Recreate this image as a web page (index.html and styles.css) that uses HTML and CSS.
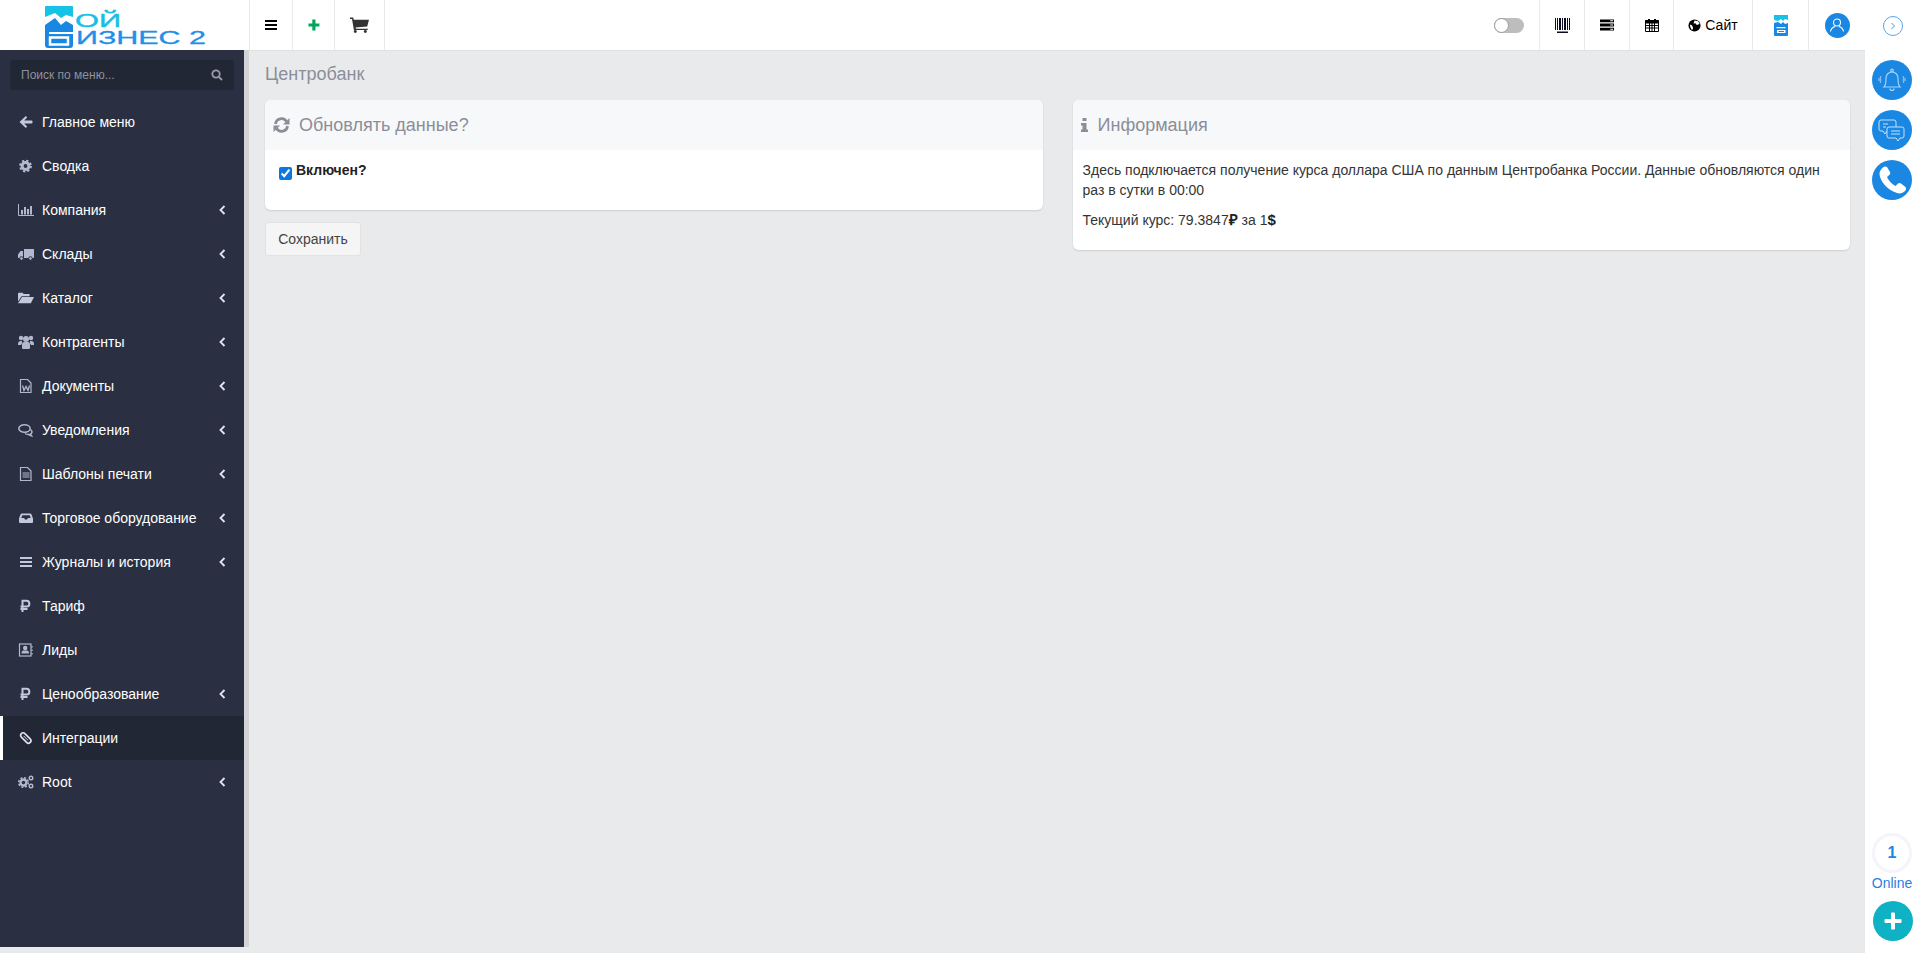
FILE: index.html
```html
<!DOCTYPE html>
<html lang="ru">
<head>
<meta charset="utf-8">
<title>Центробанк</title>
<link rel="stylesheet" href="styles.css">
</head>
<body>
<div class="app">
  <div class="workspace">
    <header class="topbar">
      <div class="logo">
        <svg class="logo-svg" width="170" height="45" viewBox="0 0 170 45">
          <path d="M1 1h26q1 0 1 1v10l-7-2-5 3-6-5L0 12V2q0-1 1-1z" fill="#16c3e6"/>
          <path d="M0 20l10-7 6 7 5-4 7 4v20q0 3-3 3H3q-3 0-3-3z" fill="#1a87e2"/>
          <rect x="4" y="27" width="24" height="2" fill="#fff"/>
          <rect x="5" y="32.500" width="18" height="7" fill="none" stroke="#fff" stroke-width="2.500"/>
          <text class="logo-top" x="30" y="22" textLength="46" lengthAdjust="spacingAndGlyphs">ОЙ</text>
          <text class="logo-bottom" x="31" y="39" textLength="130" lengthAdjust="spacingAndGlyphs">ИЗНЕС 2</text>
        </svg>
      </div>
      <a class="cell w-bars"><svg class="tb" viewBox="0 0 14 14"><path d="M1 2h12v2H1zM1 6h12v2H1zM1 10h12v2H1z" fill="#000"/></svg></a>
      <a class="cell w-plus"><svg class="tb" viewBox="0 0 14 14"><path d="M5.300 1.500h3.200v3.900h3.900v3.200H8.500v3.900H5.300V8.600H1.500V5.400h3.800z" fill="#00a65a"/></svg></a>
      <a class="cell w-cart"><svg class="cart" viewBox="0 0 18 15"><path d="M0 .5h3l.6 2H18l-1.700 6.500-11 .8.300 1.200h11.200v1.300H3.700L1.900 1.900H0z" fill="#333"/><circle cx="5" cy="13.600" r="1.400" fill="#333"/><circle cx="14.500" cy="13.600" r="1.400" fill="#333"/></svg></a>
      <div class="top-fill"><span class="toggle"><span class="knob"></span></span></div>
      <a class="cell w-45"><svg class="barcode" viewBox="0 0 15 15"><path d="M0 0h1v12H0zM2 0h1v12H2zM4 0h2v12H4zM7 0h1v12H7zM9 0h2v12H9zM12 0h1v12h-1zM14 0h1v12h-1zM2 13.500h11V15H2z" fill="#0b0b26"/></svg></a>
      <a class="cell w-45"><svg class="tb" viewBox="0 0 15 13"><path d="M0 .5h15v3H0zM0 5h15v3H0zM0 9.500h15v3H0z" fill="#000"/><path d="M11 1.500h3v1h-3zM11 6h3v1h-3zM11 10.500h3v1h-3z" fill="#fff"/></svg></a>
      <a class="cell w-44"><svg class="tb" viewBox="0 0 14 14"><path d="M.5 2.500h13v11H.5z" fill="#fff" stroke="#000"/><path d="M.5 2.500h13v2.500H.5z" fill="#000" stroke="#000"/><path d="M3 1h2v3H3zM9 1h2v3H9z" fill="#000"/><path d="M4.500 5v8M7 5v8M9.500 5v8M1 7.500h12M1 10h12" stroke="#000" fill="none"/></svg></a>
      <a class="cell w-site"><svg class="globe" viewBox="0 0 14 14"><circle cx="7" cy="7" r="6.500" fill="#000"/><path d="M7 1.500l4 .8 1.500 3.200-3 1-1.500-1.800-2 .2zM2 6l2.500 1 1 3-1.200 2L2.500 9z" fill="#fff"/></svg><span>Сайт</span></a>
      <a class="cell w-56"><svg class="mini-logo" viewBox="0 0 14 21"><path d="M0 0h14v5l-3-1-2 2-2-2-3 2-4-1z" fill="#16c3e6"/><path d="M0 8l4-1 3 2 2-2 2 2 3-1v12q0 1-1 1H1q-1 0-1-1z" fill="#1a87e2"/><path d="M2.500 12h9v1.200h-9zM3 15h8.500v3H3z" fill="#fff"/><path d="M4.500 16h5.500v1H4.500z" fill="#1a87e2"/></svg></a>
      <a class="cell w-57"><span class="avatar"><svg width="16" height="16" viewBox="0 0 16 16" fill="none" stroke="#fff" stroke-width="1.100"><circle cx="8" cy="5.500" r="3.500"/><path d="M1.500 14.500c.5-3 3-4.500 4.500-5M14.500 14.500c-.5-3-3-4.500-4.500-5"/></svg></span></a>
    </header>
    <div class="below">
      <aside class="side">
        <div class="side-inner">
          <div class="search-wrap">
            <div class="search"><span>Поиск по меню...</span>
              <svg class="search-ic" viewBox="0 0 12 12" fill="none" stroke="#9a9da7" stroke-width="1.800"><circle cx="5" cy="5" r="3.700"/><path d="M7.800 7.800L11 11"/></svg>
            </div>
          </div>
          <nav class="menu">
            <a class="item"><svg class="mi" viewBox="0 0 14 14"><path d="M6.800 1L.5 7l6.300 6 1.400-1.400-3-3h7.300q1 0 1-1V6.400q0-1-1-1H5.200l3-3z" fill="#c3c8dc"/></svg><span>Главное меню</span></a>
            <a class="item"><svg class="mi" viewBox="0 0 14 14"><circle cx="6.500" cy="7" r="3.400" fill="none" stroke="#b4b8cf" stroke-width="3"/><circle cx="6.500" cy="7" r="5.400" fill="none" stroke="#b4b8cf" stroke-width="2" stroke-dasharray="2.300 1.940"/></svg><span>Сводка</span></a>
            <a class="item"><svg class="mi" viewBox="0 0 16 14"><path d="M.5 1v11.500H16" fill="none" stroke="#b4b8cf"/><path d="M3 7h2v4.500H3zM6 4h2v7.500H6zM9 6h2v5.500H9zM12 3h2v8.500h-2z" fill="#b4b8cf"/></svg><span>Компания</span><svg class="chev" viewBox="0 0 7 10"><path d="M5.500 1L1.500 5l4 4" fill="none" stroke="#e4e6ee" stroke-width="1.800"/></svg></a>
            <a class="item"><svg class="mi" viewBox="0 0 16 14"><path d="M6 2h10v9H6zM5 4v7H0V7.500L2.500 4z" fill="#b4b8cf"/><circle cx="3.500" cy="11.500" r="1.800" fill="#b4b8cf" stroke="#2a3042"/><circle cx="12.500" cy="11.500" r="1.800" fill="#b4b8cf" stroke="#2a3042"/></svg><span>Склады</span><svg class="chev" viewBox="0 0 7 10"><path d="M5.500 1L1.500 5l4 4" fill="none" stroke="#e4e6ee" stroke-width="1.800"/></svg></a>
            <a class="item"><svg class="mi" viewBox="0 0 18 14"><path d="M0 2q0-1 1-1h4l1.500 1.500H13V5H4L0 11z" fill="#c3c8dc"/><path d="M4.500 6H18l-3.500 7H0z" fill="#c3c8dc"/></svg><span>Каталог</span><svg class="chev" viewBox="0 0 7 10"><path d="M5.500 1L1.500 5l4 4" fill="none" stroke="#e4e6ee" stroke-width="1.800"/></svg></a>
            <a class="item"><svg class="mi" viewBox="0 0 16 14"><circle cx="3" cy="3" r="2.200" fill="#b4b8cf"/><circle cx="13" cy="3" r="2.200" fill="#b4b8cf"/><circle cx="8" cy="4" r="3" fill="#b4b8cf"/><path d="M0 9q0-3 3-3h1v2.500L3 10H0zM16 9q0-3-3-3h-1v2.500l1 1.500h3zM4 10q0-3 2-3h4q2 0 2 3v3q0 1-1 1H5q-1 0-1-1z" fill="#b4b8cf"/></svg><span>Контрагенты</span><svg class="chev" viewBox="0 0 7 10"><path d="M5.500 1L1.500 5l4 4" fill="none" stroke="#e4e6ee" stroke-width="1.800"/></svg></a>
            <a class="item"><svg class="mi" viewBox="0 0 14 14"><path d="M1.500.5h7l3.500 3.500v9.500H1.500z" fill="none" stroke="#b4b8cf" stroke-width="1.200"/><path d="M3.500 6.500l1.500 5 2-4 2 4 1.500-5" fill="none" stroke="#b4b8cf" stroke-width="1.300"/></svg><span>Документы</span><svg class="chev" viewBox="0 0 7 10"><path d="M5.500 1L1.500 5l4 4" fill="none" stroke="#e4e6ee" stroke-width="1.800"/></svg></a>
            <a class="item"><svg class="mi" viewBox="0 0 16 14"><ellipse cx="6.500" cy="5.500" rx="5.700" ry="3.800" fill="none" stroke="#b4b8cf" stroke-width="1.500"/><path d="M12.500 6.500c2 1.500 2 3.500 0 4.500l1 1.800-3-1.300q-2 0-3.500-1" fill="none" stroke="#b4b8cf" stroke-width="1.500"/></svg><span>Уведомления</span><svg class="chev" viewBox="0 0 7 10"><path d="M5.500 1L1.500 5l4 4" fill="none" stroke="#e4e6ee" stroke-width="1.800"/></svg></a>
            <a class="item"><svg class="mi" viewBox="0 0 14 14"><path d="M1.500.5h7l3.500 3.500v9.500H1.500z" fill="none" stroke="#b4b8cf" stroke-width="1.200"/><path d="M3.500 6h7M3.500 8h7M3.500 10h7" fill="none" stroke="#b4b8cf"/></svg><span>Шаблоны печати</span><svg class="chev" viewBox="0 0 7 10"><path d="M5.500 1L1.500 5l4 4" fill="none" stroke="#e4e6ee" stroke-width="1.800"/></svg></a>
            <a class="item"><svg class="mi" viewBox="0 0 14 14"><path d="M3 2.500h8q1 0 1.500 1l1.500 4V11q0 1-1 1H1q-1 0-1-1V7.500l1.500-4q.5-1 1.500-1z" fill="#c3c8dc"/><path d="M3.300 4.300h7.400l1 2.700H9L8 8.500H6L5 7H2.300z" fill="#2a3042"/></svg><span>Торговое оборудование</span><svg class="chev" viewBox="0 0 7 10"><path d="M5.500 1L1.500 5l4 4" fill="none" stroke="#e4e6ee" stroke-width="1.800"/></svg></a>
            <a class="item"><svg class="mi" viewBox="0 0 14 14"><path d="M1 2h12v2H1zM1 6h12v2H1zM1 10h12v2H1z" fill="#c3c8dc"/></svg><span>Журналы и история</span><svg class="chev" viewBox="0 0 7 10"><path d="M5.500 1L1.500 5l4 4" fill="none" stroke="#e4e6ee" stroke-width="1.800"/></svg></a>
            <a class="item"><svg class="mi" viewBox="0 0 14 14"><path d="M3.500 13V1.800h4a2.800 2.800 0 010 5.700H1.500M1.500 10h7" fill="none" stroke="#c3c8dc" stroke-width="2"/></svg><span>Тариф</span></a>
            <a class="item"><svg class="mi" viewBox="0 0 14 14"><rect x=".5" y="1" width="11.500" height="12" fill="none" stroke="#b4b8cf" stroke-width="1.200"/><circle cx="6.200" cy="5" r="2.200" fill="#b4b8cf"/><path d="M2.500 10.500q0-3 2-3h3.500q2 0 2 3z" fill="#b4b8cf"/><path d="M13 3v1.500M13 6.500V8M13 10v1.500" stroke="#b4b8cf" stroke-width="1.300"/></svg><span>Лиды</span></a>
            <a class="item"><svg class="mi" viewBox="0 0 14 14"><path d="M3.500 13V1.800h4a2.800 2.800 0 010 5.700H1.500M1.500 10h7" fill="none" stroke="#c3c8dc" stroke-width="2"/></svg><span>Ценообразование</span><svg class="chev" viewBox="0 0 7 10"><path d="M5.500 1L1.500 5l4 4" fill="none" stroke="#e4e6ee" stroke-width="1.800"/></svg></a>
            <a class="item active"><svg class="mi" viewBox="0 0 14 14"><rect x=".5" y="4.500" width="12.500" height="5" rx="2.500" transform="rotate(45 6.750 7)" fill="none" stroke="#dfe1ea" stroke-width="1.700"/><path d="M4.500 4.800l4.500 4.500" stroke="#dfe1ea" stroke-width="1"/></svg><span>Интеграции</span></a>
            <a class="item"><svg class="mi" viewBox="0 0 16 14"><circle cx="5.500" cy="7.500" r="3" fill="none" stroke="#b4b8cf" stroke-width="2.400"/><circle cx="5.500" cy="7.500" r="4.800" fill="none" stroke="#b4b8cf" stroke-width="1.500" stroke-dasharray="2 1.770"/><circle cx="13" cy="3" r="1.800" fill="none" stroke="#b4b8cf" stroke-width="1.400"/><circle cx="13" cy="11" r="1.800" fill="none" stroke="#b4b8cf" stroke-width="1.400"/></svg><span>Root</span><svg class="chev" viewBox="0 0 7 10"><path d="M5.500 1L1.500 5l4 4" fill="none" stroke="#e4e6ee" stroke-width="1.800"/></svg></a>
          </nav>
        </div>
        <div class="side-scroll"></div>
      </aside>
      <main class="main">
        <h1 class="page-title">Центробанк</h1>
        <div class="columns">
          <div class="col">
            <section class="card">
              <h2 class="card-head">
                <svg class="refresh" viewBox="0 0 17 16" fill="none" stroke="#8b8e99" stroke-width="2.800"><path d="M2.500 7a6 6 0 0 1 11-2.500M14.500 9a6 6 0 0 1-11 2.500"/><path d="M16.500 1v6.500H10zM.5 15V8.500H7z" fill="#8b8e99" stroke="none"/></svg>
                <span>Обновлять данные?</span>
              </h2>
              <div class="card-body check-body">
                <input class="check" type="checkbox" checked>
                <b class="check-label">Включен?</b>
              </div>
            </section>
            <button class="save" type="button">Сохранить</button>
          </div>
          <div class="col">
            <section class="card">
              <h2 class="card-head">
                <svg class="info" viewBox="0 0 7 14"><path d="M1.500 0h4v3h-4zM0 5h5.500v6.500H7V14H0v-2.500h1.500V7.500H0z" fill="#8b8e99"/></svg>
                <span>Информация</span>
              </h2>
              <div class="card-body info-body">
                <p>Здесь подключается получение курса доллара США по данным Центробанка России. Данные обновляются один раз в сутки в 00:00</p>
                <p>Текущий курс: 79.3847<b class="cur">₽</b> за 1<b class="cur">$</b></p>
              </div>
            </section>
          </div>
        </div>
      </main>
    </div>
  </div>
  <aside class="rail">
    <div class="rail-top">
      <span class="rail-toggle"><svg width="6" height="8" viewBox="0 0 6 8"><path d="M1.500 1l3 3-3 3" fill="none" stroke="#3f97e4"/></svg></span>
      <span class="round"><svg width="28" height="28" viewBox="0 0 28 28" fill="none" stroke="#a9d3f6" stroke-width="1.200"><path d="M6 21c2-2 2-5 2-9a6 6 0 0 1 12 0c0 4 0 7 2 9z"/><circle cx="14" cy="4.500" r="1.300"/><path d="M12 22.500a2 2 0 0 0 4 0"/><path d="M2.500 10v7M1 12v3M25.500 10v7M27 12v3" stroke-width="1.300" stroke="#7fbdf0"/></svg></span>
      <span class="round"><svg width="28" height="28" viewBox="0 0 28 28" fill="none" stroke="#c4e2fa" stroke-width="1"><path d="M3 4h13q2 0 2 2v7q0 2-2 2H9l-2 3-2-3H3q-2 0-2-2V6q0-2 2-2z" fill="#1a87e2"/><path d="M11 11h13q2 0 2 2v7q0 2-2 2h-2l-2 3-2-3H11q-2 0-2-2v-7q0-2 2-2z" fill="#1a87e2"/><path d="M5 8h5M5 11h3M13 15h9M13 18h9"/></svg></span>
      <span class="round"><svg width="32" height="32" viewBox="0 0 32 32"><path d="M7 3.500c1-1 3-1.500 4-.5l3 5c.5 1 .3 2-.5 2.800L11 13c1.500 3.500 4.500 7 8.500 9l2.500-2.500c1-.8 2-.8 3 0l4.500 3.500c1 1 .5 3-.5 4-2 2-5 3-8 2C11 26 4 17 3.500 10 3.300 7.500 5 5 7 3.500z" fill="#fff"/></svg></span>
    </div>
    <div class="rail-bottom">
      <span class="online-count">1</span>
      <span class="online-label">Online</span>
      <span class="round add"><svg width="20" height="20" viewBox="0 0 20 20"><path d="M8 2.500q0-1 1-1h2q1 0 1 1V8h5.500q1 0 1 1v2q0 1-1 1H12v5.500q0 1-1 1H9q-1 0-1-1V12H2.500q-1 0-1-1V9q0-1 1-1H8z" fill="#fff"/></svg></span>
    </div>
  </aside>
</div>
</body>
</html>
```

FILE: styles.css
```css
* { box-sizing: border-box; }
html, body { margin: 0; height: 100%; }
body {
  font-family: "Liberation Sans", Arial, sans-serif;
  font-size: 14px;
  line-height: 20px;
  color: #343434;
  background: #e9eaec;
  overflow: hidden;
}
.app { display: flex; height: 953px; }
.workspace { flex: 1; min-width: 0; display: flex; flex-direction: column; }

.topbar { height: 50px; flex: none; display: flex; background: #fff; }
.logo { width: 249px; flex: none; padding: 5px 0 0 45px; }
.logo-svg { display: block; }
.logo-top { font: 400 19px "Liberation Sans", sans-serif; fill: #16bfe6; stroke: #16bfe6; stroke-width: .4px; }
.logo-bottom { font: 400 18px "Liberation Sans", sans-serif; fill: #1f8fe8; stroke: #1f8fe8; stroke-width: .3px; }
.cell {
  display: flex; align-items: center; justify-content: center;
  flex: none; height: 50px; border-left: 1px solid #e9eaec; color: #000;
}
.w-bars { width: 43px; }
.w-plus { width: 42px; }
.w-cart { width: 51px; border-right: 1px solid #e9eaec; }
.w-45 { width: 45px; }
.w-44 { width: 44px; }
.w-site { width: 79px; gap: 4px; }
.w-56 { width: 56px; }
.w-57 { width: 57px; }
.tb { width: 14px; height: 14px; }
.cart { width: 19px; height: 16px; }
.barcode { width: 15px; height: 15px; }
.globe { width: 13px; height: 13px; }
.mini-logo { width: 14px; height: 21px; }
.top-fill { flex: 1; display: flex; align-items: center; justify-content: flex-end; padding-right: 15px; }
.toggle { width: 30px; height: 15px; border-radius: 8px; background: #bdbdbd; display: block; }
.knob { display: block; width: 15px; height: 15px; border-radius: 50%; background: #fff; border: 1px solid #9a9a9a; }
.avatar {
  width: 25px; height: 25px; border-radius: 50%; background: #1a87e2;
  display: flex; align-items: center; justify-content: center;
}

.below { flex: 1; min-height: 0; display: flex; }
.side { width: 249px; flex: none; display: flex; margin-bottom: 6px; }
.side-inner { width: 244px; background: #2a3042; }
.side-scroll { width: 5px; background: #d3d4d6; }
.search-wrap { height: 50px; padding: 10px; }
.search {
  height: 30px; background: #222736; border-radius: 3px; padding: 0 11px;
  display: flex; align-items: center; justify-content: space-between;
  font-size: 12px; color: #8e919c;
}
.search-ic { width: 12px; height: 12px; }
.menu { display: flex; flex-direction: column; }
.item {
  height: 44px; display: flex; align-items: center; padding: 0 18px 0 18px;
  color: #fff;
}
.item.active { background: #222736; border-left: 3px solid #fff; padding-left: 15px; }
.mi { width: 16px; height: 14px; margin-right: 8px; flex: none; }
.chev { width: 7px; height: 10px; margin-left: auto; flex: none; }

.main { flex: 1; min-width: 0; padding: 0 15px 0 16px; border-top: 1px solid #dedfe1; }
.page-title { margin: 0; height: 49px; font-size: 18px; font-weight: 400; line-height: 46px; color: #8b8e99; }
.columns { display: grid; grid-template-columns: 1fr 1fr; gap: 30px; }
.card { background: #fff; border-radius: 6px; box-shadow: 0 1px 2px rgba(0, 0, 0, .12); overflow: hidden; }
.card-head {
  margin: 0; height: 50px; padding: 0 8px; display: flex; align-items: center; gap: 9px;
  background: #f7f8fa; font-size: 18px; font-weight: 400; color: #8b8e99;
}
.refresh { width: 17px; height: 16px; }
.info { width: 7px; height: 14px; margin-right: 1px; }
.card-body { padding: 10px; }
.check-body { display: flex; align-items: flex-start; padding-bottom: 30px; }
.check { margin: 7px 4px 0 4px; width: 13px; height: 13px; accent-color: #0a78e0; }
.check-label { color: #222; }
.info-body { padding-bottom: 20px; }
.info-body p { margin: 0 0 10px; }
.info-body p:last-child { margin: 0; }
.cur { color: #222; font-size: 15px; line-height: 1; }
.save {
  display: block; margin-top: 12px; width: 96px; height: 34px; padding: 0;
  font: 14px "Liberation Sans", sans-serif; color: #444;
  background: #f5f5f5; border: 1px solid #e2e2e2; border-radius: 3px;
}

.rail {
  width: 55px; flex: none; background: #fff; display: flex; flex-direction: column;
  justify-content: space-between; align-items: center; padding: 16px 1px 12px 0;
}
.rail-top { display: flex; flex-direction: column; align-items: center; gap: 10px; }
.rail-toggle {
  width: 20px; height: 20px; border-radius: 50%; border: 1px solid #5aa5e8;
  display: flex; align-items: center; justify-content: center; margin: 0 0 14px 2px;
}
.round {
  width: 40px; height: 40px; border-radius: 50%; background: #1a87e2;
  display: flex; align-items: center; justify-content: center;
}
.rail-bottom { display: flex; flex-direction: column; align-items: center; }
.online-count {
  width: 40px; height: 40px; border-radius: 50%; border: 3px solid #f3f5fa;
  display: flex; align-items: center; justify-content: center;
  font-size: 16px; font-weight: 700; color: #1a87e2;
}
.online-label { font-size: 14px; color: #2b7fe0; height: 28px; line-height: 20px; }
.add { background: #0fb2c4; margin-left: 2px; }
```
